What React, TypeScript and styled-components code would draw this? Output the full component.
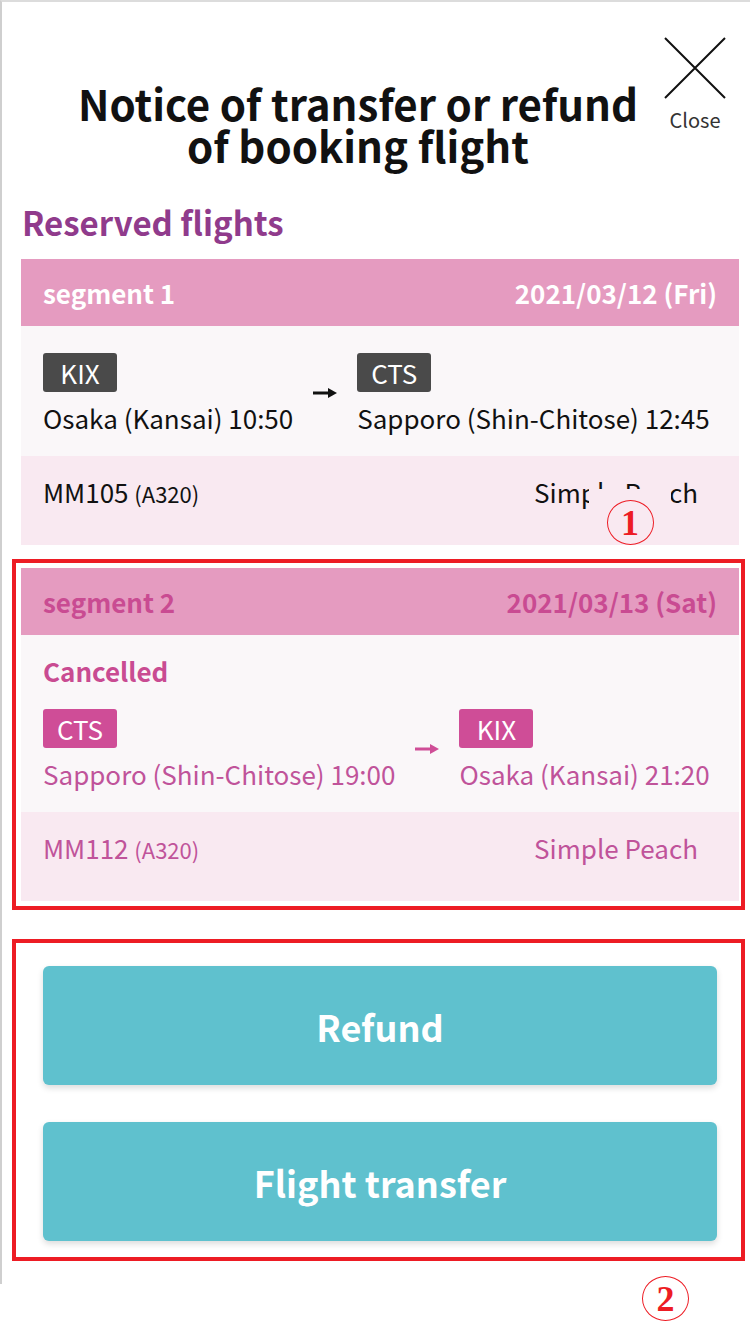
import styled, { createGlobalStyle } from "styled-components";

const GlobalStyle = createGlobalStyle`
  html, body {
    margin: 0;
    padding: 0;
    background: #ffffff;
  }
  body {
    font-family: "Noto Sans CJK JP", "Noto Sans", sans-serif;
    color: #111111;
  }
`;

type Tone = "normal" | "cancelled";

interface Segment {
  label: string;
  date: string;
  cancelled?: boolean;
  from: { code: string; text: string };
  to: { code: string; text: string };
  flight: string;
  aircraft: string;
  fare: string;
}

const segments: Segment[] = [
  {
    label: "segment 1",
    date: "2021/03/12 (Fri)",
    from: { code: "KIX", text: "Osaka (Kansai) 10:50" },
    to: { code: "CTS", text: "Sapporo (Shin-Chitose) 12:45" },
    flight: "MM105",
    aircraft: "(A320)",
    fare: "Simple Peach",
  },
  {
    label: "segment 2",
    date: "2021/03/13 (Sat)",
    cancelled: true,
    from: { code: "CTS", text: "Sapporo (Shin-Chitose) 19:00" },
    to: { code: "KIX", text: "Osaka (Kansai) 21:20" },
    flight: "MM112",
    aircraft: "(A320)",
    fare: "Simple Peach",
  },
];

const Modal = styled.div`
  position: relative;
  border-top: 2px solid #dcdcdc;
  border-left: 2px solid #cfcfcf;
  padding: 0 11px 23px 19px;
`;

const Header = styled.div`
  padding: 80px 44px 0 0;
`;

const Title = styled.h1`
  margin: 0;
  text-align: center;
  font-size: 42px;
  font-weight: 700;
  line-height: 42px;
  color: #111111;
`;

const CloseButton = styled.button`
  position: absolute;
  top: 35px;
  right: 24px;
  display: flex;
  flex-direction: column;
  align-items: center;
  gap: 9px;
  padding: 0;
  border: none;
  background: none;
  font-family: "Noto Sans CJK JP", "Noto Sans", sans-serif;
  font-size: 20px;
  line-height: 24px;
  color: #333333;
  cursor: pointer;
`;

const SectionTitle = styled.h2`
  margin: 37px 0 18px 1px;
  font-size: 33px;
  font-weight: 700;
  line-height: 38px;
  color: #903b8c;
`;

const Card = styled.div`
  position: relative;
`;

const CardHead = styled.div<{ $tone: Tone }>`
  display: flex;
  justify-content: space-between;
  align-items: center;
  height: 67px;
  padding: 0 22px;
  background: #e59bc0;
  font-size: 26px;
  font-weight: 700;
  line-height: 30px;
  color: ${(p) => (p.$tone === "cancelled" ? "#c94b92" : "#ffffff")};
`;

const CardBody = styled.div<{ $tone: Tone }>`
  padding: 27px 22px 23px;
  background: #faf7f9;
  color: ${(p) => (p.$tone === "cancelled" ? "#c0539a" : "#111111")};
`;

const Status = styled.div`
  font-size: 26px;
  font-weight: 700;
  line-height: 20px;
  margin: -1px 0 28px;
  color: #c94b92;
`;

const Route = styled.div`
  display: flex;
  align-items: center;
  gap: 20px;
`;

const Stop = styled.div`
  display: flex;
  flex-direction: column;
  align-items: flex-start;
  gap: 10px;
`;

const Code = styled.span<{ $tone: Tone }>`
  display: inline-flex;
  align-items: center;
  justify-content: center;
  width: 74px;
  height: 39px;
  border-radius: 3px;
  background: ${(p) => (p.$tone === "cancelled" ? "#cf4d97" : "#4a4a4a")};
  color: #ffffff;
  font-size: 26px;
  line-height: 30px;
`;

const Place = styled.span`
  font-size: 26px;
  line-height: 31px;
  white-space: nowrap;
`;

const CardFoot = styled.div<{ $tone: Tone }>`
  display: flex;
  justify-content: space-between;
  align-items: flex-start;
  height: 89px;
  box-sizing: border-box;
  padding: 21px 41px 0 22px;
  background: #f9e9f1;
  font-size: 26px;
  line-height: 30px;
  color: ${(p) => (p.$tone === "cancelled" ? "#c0539a" : "#111111")};
`;

const Aircraft = styled.span`
  font-size: 22px;
`;

const Highlight = styled.div<{ $pad: string }>`
  position: relative;
  margin: 0 -6px 0 -9px;
  border: 4px solid #ed1c24;
  padding: ${(p) => p.$pad};
`;

const Marker = styled.div<{ $bg?: string }>`
  position: absolute;
  display: flex;
  justify-content: center;
  align-items: flex-end;
  background: ${(p) => p.$bg || "#ffffff"};
`;

const NoteRow = styled.div`
  display: flex;
  justify-content: flex-end;
  margin-top: -8px;
  padding-right: 61px;
`;

const Circled = styled.span`
  display: flex;
  align-items: center;
  justify-content: center;
  width: 45px;
  height: 43px;
  border: 1.5px solid #ed1c24;
  border-radius: 50%;
  color: #ed1c24;
  font-family: "Liberation Serif", serif;
  font-weight: 700;
  font-size: 36px;
  line-height: 1;
`;

const Actions = styled.div`
  display: flex;
  flex-direction: column;
  gap: 37px;
`;

const ActionButton = styled.button`
  height: 119px;
  border: none;
  border-radius: 6px;
  background: #5fc1ce;
  box-shadow: 0 3px 6px rgba(0, 0, 0, 0.14);
  color: #ffffff;
  font-family: "Noto Sans CJK JP", "Noto Sans", sans-serif;
  font-size: 36px;
  font-weight: 700;
  line-height: 40px;
  cursor: pointer;
`;

const CloseIcon = () => (
  <svg width="62" height="62" viewBox="0 0 62 62">
    <path d="M1 1 L61 61 M61 1 L1 61" stroke="#111" strokeWidth="2" fill="none" />
  </svg>
);

const Arrow = ({ color }: { color: string }) => (
  <svg width="24" height="12" viewBox="0 0 24 12">
    <path d="M0 6 H17" stroke={color} strokeWidth="3" />
    <path d="M15 1 L24 6 L15 11 Z" fill={color} />
  </svg>
);

const SegmentCard = ({ s, children }: { s: Segment; children?: React.ReactNode }) => {
  const tone: Tone = s.cancelled ? "cancelled" : "normal";
  return (
    <Card>
      <CardHead $tone={tone}>
        <span>{s.label}</span>
        <span>{s.date}</span>
      </CardHead>
      <CardBody $tone={tone}>
        {s.cancelled && <Status>Cancelled</Status>}
        <Route>
          <Stop>
            <Code $tone={tone}>{s.from.code}</Code>
            <Place>{s.from.text}</Place>
          </Stop>
          <Arrow color={s.cancelled ? "#cf4d97" : "#111"} />
          <Stop>
            <Code $tone={tone}>{s.to.code}</Code>
            <Place>{s.to.text}</Place>
          </Stop>
        </Route>
      </CardBody>
      <CardFoot $tone={tone}>
        <span>
          {s.flight} <Aircraft>{s.aircraft}</Aircraft>
        </span>
        <span>{s.fare}</span>
      </CardFoot>
      {children}
    </Card>
  );
};

const App = () => {
  return (
    <>
      <GlobalStyle />
      <Modal>
        <Header>
          <Title>
            Notice of transfer or refund
            <br />
            of booking flight
          </Title>
        </Header>
        <CloseButton>
          <CloseIcon />
          Close
        </CloseButton>
        <SectionTitle>Reserved flights</SectionTitle>
        <SegmentCard s={segments[0]}>
          <Marker $bg="#f9e9f1" style={{ right: 68, bottom: 0, width: 82, height: 56 }}>
            <Circled>1</Circled>
          </Marker>
        </SegmentCard>
        <div style={{ height: 14 }} />
        <Highlight $pad="5px 2px 5px 5px">
          <SegmentCard s={segments[1]} />
        </Highlight>
        <div style={{ height: 29 }} />
        <Highlight $pad="23px 24px 16px 27px">
          <Actions>
            <ActionButton>Refund</ActionButton>
            <ActionButton>Flight transfer</ActionButton>
          </Actions>
        </Highlight>
      </Modal>
      <NoteRow>
        <Circled>2</Circled>
      </NoteRow>
    </>
  );
};

export default App;
